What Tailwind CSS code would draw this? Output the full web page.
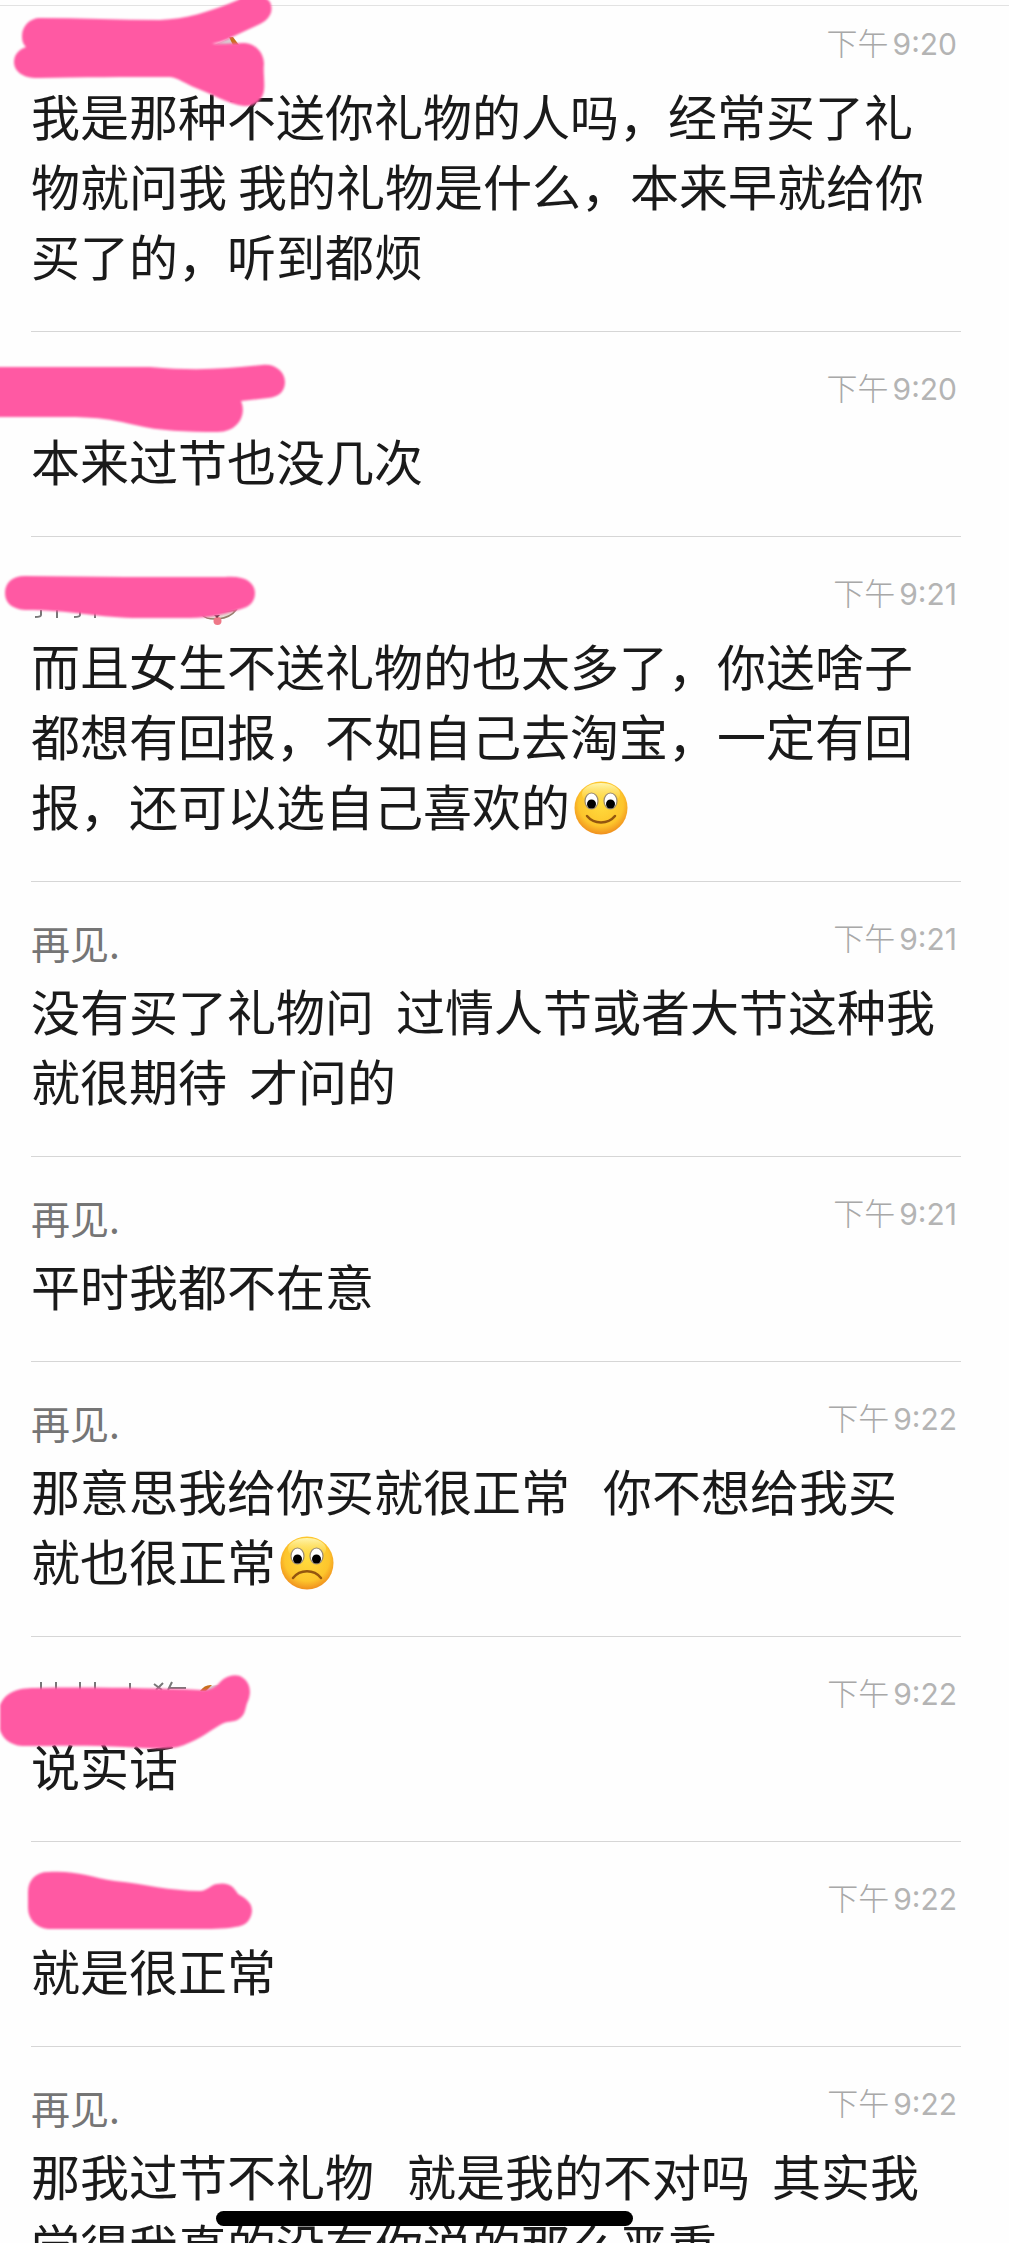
<!DOCTYPE html>
<html lang="zh-CN">
<head>
<meta charset="utf-8">
<meta name="viewport" content="width=device-width, initial-scale=1">
<title>聊天记录</title>
<script src="https://cdn.jsdelivr.net/npm/@tailwindcss/browser@4"></script>
</head>
<body class="bg-[#fefefe] font-['Noto_Sans_CJK_SC',sans-serif] text-[#1a1a1a]">
<!-- Shared emoji artwork -->
<svg class="absolute size-0" aria-hidden="true">
  <defs>
    <radialGradient id="face" cx="50%" cy="42%" r="60%">
      <stop offset="0" stop-color="#ffdc3e"/><stop offset=".7" stop-color="#fdc52c"/><stop offset="1" stop-color="#ee881c"/>
    </radialGradient>
    <linearGradient id="shine" x1="0" y1="0" x2="0" y2="1">
      <stop offset="0" stop-color="#fff6b0"/><stop offset="1" stop-color="#ffe04a" stop-opacity="0"/>
    </linearGradient>
    <g id="head">
      <circle cx="27" cy="27" r="26.5" fill="url(#face)"/>
      <ellipse cx="27" cy="13" rx="19" ry="11" fill="url(#shine)"/>
      <g fill="#fff" stroke="#9a8a70" stroke-width="1.2"><ellipse cx="17.500" cy="20" rx="6.500" ry="8"/><ellipse cx="36.500" cy="20" rx="6.500" ry="8"/></g>
      <circle cx="17.500" cy="23" r="4.500"/><circle cx="36.500" cy="23" r="4.500"/>
    </g>
  </defs>
</svg>
<main class="h-dvh overflow-hidden">
  <div class="h-1.5 border-b border-[#e2e2e2]"></div>
  <ol class="pr-12 pl-[31px]">
    <li class="relative border-b border-[#d6d6d6] pt-[14px] pb-[41px]">
      <div class="flex h-15 justify-end">
        <time class="mr-1 font-['Inter','Noto_Sans_CJK_SC',sans-serif] text-[31px] leading-[48px] font-light text-[#a8a8a8]">下午<span class="ml-1 text-[30px] font-normal text-[#b4b4b4]">9:20</span></time>
      </div>
      <p class="text-[49px] leading-[70px] whitespace-pre">我是那种不送你礼物的人吗，经常买了礼
物就问我 我的礼物是什么，本来早就给你
买了的，听到都烦</p>
      <svg class="absolute top-0 -left-[31px] h-[110px] w-[290px] overflow-visible" aria-hidden="true">
        <path d="M214 39L230 32L238 39Z" fill="#d8cdd2"/><path d="M229 31L233 31L239 39H233Z" fill="#c8701e"/>
        <path class="blur-[1px]" fill="#ff59a3" d="M22 30C22 20 30 12 40 12C80 12 120 14 160 14C185 13 210 6 238 -6C244 -12 262 -14 270 -4C274 5 270 13 260 18L232 31C225 35 216 37 212 38C225 38 238 37 245 37C256 38 264 47 264 58C263 66 265 76 264 84C263 94 254 101 244 100C228 98 212 88 196 82C186 78 178 72 170 71C125 71 80 71 40 72C26 73 14 67 14 56C14 48 20 43 26 41C23 38 22 35 22 30Z"/>
      </svg>
    </li>
    <li class="relative border-b border-[#d6d6d6] pt-[33px] pb-[41px]">
      <div class="flex h-15 justify-end">
        <time class="mr-1 font-['Inter','Noto_Sans_CJK_SC',sans-serif] text-[31px] leading-[48px] font-light text-[#a8a8a8]">下午<span class="ml-1 text-[30px] font-normal text-[#b4b4b4]">9:20</span></time>
      </div>
      <p class="text-[49px] leading-[70px] whitespace-pre">本来过节也没几次</p>
      <svg class="absolute top-0 -left-[31px] h-[110px] w-[290px] overflow-visible" aria-hidden="true">
        <path class="blur-[1px]" fill="#ff59a3" d="M-5 35H150C195 39 225 37 262 33C274 31 285 39 285 50C285 60 278 65 268 66L241 69C247 83 238 100 218 100C185 100 160 99 135 93C110 87 95 85 65 85H-5Z"/>
      </svg>
    </li>
    <li class="relative border-b border-[#d6d6d6] pt-[33px] pb-[41px]">
      <div class="flex h-15 justify-end">
        <time class="mr-1 font-['Inter','Noto_Sans_CJK_SC',sans-serif] text-[31px] leading-[48px] font-light text-[#a8a8a8]">下午<span class="ml-1 text-[30px] font-normal text-[#b4b4b4]">9:21</span></time>
      </div>
      <p class="text-[49px] leading-[70px] whitespace-pre">而且女生不送礼物的也太多了，你送啥子
都想有回报，不如自己去淘宝，一定有回
报，还可以选自己喜欢的<svg class="ml-1 inline-block size-[54px] align-[-9px]" viewBox="0 0 54 54" role="img" aria-label="微笑"><use href="#head"/><path d="M13 35C20 43.500 34 43.500 41 35" fill="none" stroke="#93560f" stroke-width="2.500" stroke-linecap="round"/></svg></p>
      <svg class="absolute top-0 -left-[31px] h-[110px] w-[290px] overflow-visible" aria-hidden="true">
        <g fill="none" stroke="#777" stroke-width="2"><path d="M41 73V78Q41 80 35 80M57 73V81M80 73V78Q80 80 74 80M95 74V81"/></g>
        <path d="M202 78C208 84 228 84 236 73Z" fill="#e6dcd4" stroke="#94806c" stroke-width="1.500"/><circle cx="217.500" cy="84" r="4" fill="#ee7888"/><path d="M214 78L220 78L217 81Z" fill="#54343a"/>
        <path class="blur-[1px]" fill="#ff59a3" d="M25 39C90 40 160 40 225 40C244 38 255 45 255 56C255 65 249 70 241 72C225 77 210 81 190 81H140C100 81 70 73 25 73C12 72 5 66 5 56C5 46 12 39 25 39Z"/>
      </svg>
    </li>
    <li class="relative border-b border-[#d6d6d6] pt-[33px] pb-[41px]">
      <div class="flex h-15 justify-between">
        <span class="text-[39px] leading-[54px] text-[#757575]">再见.</span>
        <time class="mr-1 font-['Inter','Noto_Sans_CJK_SC',sans-serif] text-[31px] leading-[48px] font-light text-[#a8a8a8]">下午<span class="ml-1 text-[30px] font-normal text-[#b4b4b4]">9:21</span></time>
      </div>
      <p class="text-[49px] leading-[70px] whitespace-pre">没有买了礼物问  过情人节或者大节这种我
就很期待  才问的</p>
    </li>
    <li class="relative border-b border-[#d6d6d6] pt-[33px] pb-[41px]">
      <div class="flex h-15 justify-between">
        <span class="text-[39px] leading-[54px] text-[#757575]">再见.</span>
        <time class="mr-1 font-['Inter','Noto_Sans_CJK_SC',sans-serif] text-[31px] leading-[48px] font-light text-[#a8a8a8]">下午<span class="ml-1 text-[30px] font-normal text-[#b4b4b4]">9:21</span></time>
      </div>
      <p class="text-[49px] leading-[70px] whitespace-pre">平时我都不在意</p>
    </li>
    <li class="relative border-b border-[#d6d6d6] pt-[33px] pb-[41px]">
      <div class="flex h-15 justify-between">
        <span class="text-[39px] leading-[54px] text-[#757575]">再见.</span>
        <time class="mr-1 font-['Inter','Noto_Sans_CJK_SC',sans-serif] text-[31px] leading-[48px] font-light text-[#a8a8a8]">下午<span class="ml-1 text-[30px] font-normal text-[#b4b4b4]">9:22</span></time>
      </div>
      <p class="text-[49px] leading-[70px] whitespace-pre">那意思我给你买就很正常   你不想给我买
就也很正常<svg class="ml-1 inline-block size-[54px] align-[-9px]" viewBox="0 0 54 54" role="img" aria-label="难过"><use href="#head"/><path d="M13 42C20 33 34 33 41 42" fill="none" stroke="#93560f" stroke-width="2.500" stroke-linecap="round"/></svg></p>
    </li>
    <li class="relative border-b border-[#d6d6d6] pt-[33px] pb-[41px]">
      <div class="flex h-15 justify-end">
        <time class="mr-1 font-['Inter','Noto_Sans_CJK_SC',sans-serif] text-[31px] leading-[48px] font-light text-[#a8a8a8]">下午<span class="ml-1 text-[30px] font-normal text-[#b4b4b4]">9:22</span></time>
      </div>
      <p class="text-[49px] leading-[70px] whitespace-pre">说实话</p>
      <svg class="absolute top-0 -left-[31px] h-[110px] w-[290px] overflow-visible" aria-hidden="true">
        <g fill="none" stroke="#777" stroke-width="2"><path d="M41 45V53M56 45V53M80 45V53M95 45V53M130 46V53M154 47L162 53M163 46L156 53M172 45L168 53M170 51H186"/></g>
        <path d="M200 55Q208 47 222 48V55Z" fill="#d8cdd2"/><path d="M200 54Q205 47 212 48L206 54Z" fill="#c8701e"/>
        <path class="blur-[1px]" fill="#ff59a3" d="M0 68C6 55 17 51 35 51C90 50 150 51 200 53C210 54 216 50 220 45C226 39 233 37 240 39C250 44 252 54 248 64C245 70 246 78 239 82C233 86 228 83 220 88C207 96 195 105 178 110C165 113 145 111 125 110C90 108 55 109 22 109C10 108 3 102 0 93Z"/>
      </svg>
    </li>
    <li class="relative border-b border-[#d6d6d6] pt-[33px] pb-[41px]">
      <div class="flex h-15 justify-end">
        <time class="mr-1 font-['Inter','Noto_Sans_CJK_SC',sans-serif] text-[31px] leading-[48px] font-light text-[#a8a8a8]">下午<span class="ml-1 text-[30px] font-normal text-[#b4b4b4]">9:22</span></time>
      </div>
      <p class="text-[49px] leading-[70px] whitespace-pre">就是很正常</p>
      <svg class="absolute top-0 -left-[31px] h-[110px] w-[290px] overflow-visible" aria-hidden="true">
        <path class="blur-[1px]" fill="#ff59a3" d="M28 50C28 38 36 30 48 30C75 28 90 35 115 39C145 42 170 49 200 49C207 49 210 43 217 42C227 40 233 43 238 52C245 56 252 60 252 69C251 79 245 84 235 85C225 87 210 87 195 87H48C36 86 28 77 28 66Z"/>
      </svg>
    </li>
    <li class="relative pt-[33px]">
      <div class="flex h-15 justify-between">
        <span class="text-[39px] leading-[54px] text-[#757575]">再见.</span>
        <time class="mr-1 font-['Inter','Noto_Sans_CJK_SC',sans-serif] text-[31px] leading-[48px] font-light text-[#a8a8a8]">下午<span class="ml-1 text-[30px] font-normal text-[#b4b4b4]">9:22</span></time>
      </div>
      <p class="text-[49px] leading-[70px] whitespace-pre">那我过节不礼物   就是我的不对吗  其实我
学得我真的没有你说的那么严重</p>
    </li>
  </ol>
</main>
<div class="fixed bottom-[17px] left-[216px] h-[15px] w-[417px] rounded-full bg-black"></div>
</body>
</html>
